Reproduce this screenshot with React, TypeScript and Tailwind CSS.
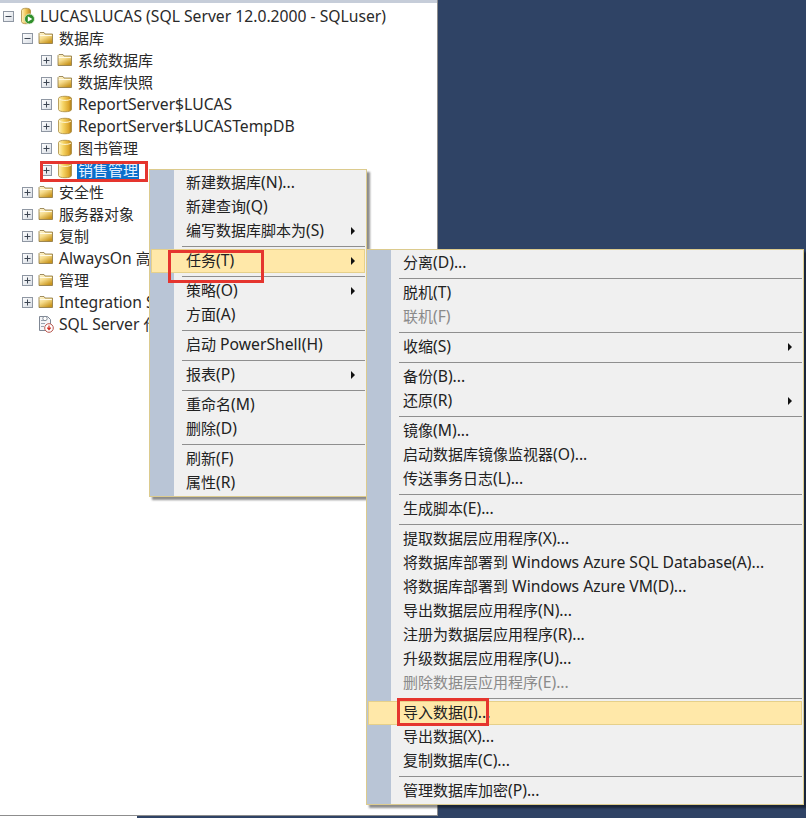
type IconKind = 'server' | 'folder' | 'db' | 'agent';

interface TreeNode {
  label: string;
  level: number;
  icon: IconKind;
  expander?: 'plus' | 'minus';
  selected?: boolean;
  clipped?: boolean;
}

const treeNodes: TreeNode[] = [
  { label: 'LUCAS\\LUCAS (SQL Server 12.0.2000 - SQLuser)', level: 0, icon: 'server', expander: 'minus' },
  { label: '数据库', level: 1, icon: 'folder', expander: 'minus' },
  { label: '系统数据库', level: 2, icon: 'folder', expander: 'plus' },
  { label: '数据库快照', level: 2, icon: 'folder', expander: 'plus' },
  { label: 'ReportServer$LUCAS', level: 2, icon: 'db', expander: 'plus' },
  { label: 'ReportServer$LUCASTempDB', level: 2, icon: 'db', expander: 'plus' },
  { label: '图书管理', level: 2, icon: 'db', expander: 'plus' },
  { label: '销售管理', level: 2, icon: 'db', expander: 'plus', selected: true },
  { label: '安全性', level: 1, icon: 'folder', expander: 'plus' },
  { label: '服务器对象', level: 1, icon: 'folder', expander: 'plus' },
  { label: '复制', level: 1, icon: 'folder', expander: 'plus' },
  { label: 'AlwaysOn 高', level: 1, icon: 'folder', expander: 'plus', clipped: true },
  { label: '管理', level: 1, icon: 'folder', expander: 'plus' },
  { label: 'Integration Services', level: 1, icon: 'folder', expander: 'plus', clipped: true },
  { label: 'SQL Server 代理', level: 1, icon: 'agent', clipped: true },
];

type MenuEntry =
  | 'sep'
  | { label: string; arrow?: boolean; disabled?: boolean; active?: boolean };

const contextMenu: MenuEntry[] = [
  { label: '新建数据库(N)...' },
  { label: '新建查询(Q)' },
  { label: '编写数据库脚本为(S)', arrow: true },
  'sep',
  { label: '任务(T)', arrow: true, active: true },
  'sep',
  { label: '策略(O)', arrow: true },
  { label: '方面(A)' },
  'sep',
  { label: '启动 PowerShell(H)' },
  'sep',
  { label: '报表(P)', arrow: true },
  'sep',
  { label: '重命名(M)' },
  { label: '删除(D)' },
  'sep',
  { label: '刷新(F)' },
  { label: '属性(R)' },
];

const taskMenu: MenuEntry[] = [
  { label: '分离(D)...' },
  'sep',
  { label: '脱机(T)' },
  { label: '联机(F)', disabled: true },
  'sep',
  { label: '收缩(S)', arrow: true },
  'sep',
  { label: '备份(B)...' },
  { label: '还原(R)', arrow: true },
  'sep',
  { label: '镜像(M)...' },
  { label: '启动数据库镜像监视器(O)...' },
  { label: '传送事务日志(L)...' },
  'sep',
  { label: '生成脚本(E)...' },
  'sep',
  { label: '提取数据层应用程序(X)...' },
  { label: '将数据库部署到 Windows Azure SQL Database(A)...' },
  { label: '将数据库部署到 Windows Azure VM(D)...' },
  { label: '导出数据层应用程序(N)...' },
  { label: '注册为数据层应用程序(R)...' },
  { label: '升级数据层应用程序(U)...' },
  { label: '删除数据层应用程序(E)...', disabled: true },
  'sep',
  { label: '导入数据(I)...', active: true },
  { label: '导出数据(X)...' },
  { label: '复制数据库(C)...' },
  'sep',
  { label: '管理数据库加密(P)...' },
];

// 라틴 글자만 살짝 크게 (원본은 Segoe UI + YaHei 조합)
function MixedText({ text }: { text: string }) {
  return (
    <>
      {text.split(/([\x20-\x7e]+)/).map((part, i) =>
        /[\x20-\x7e]/.test(part) ? (
          <span key={i} className="text-[15.7px] leading-[15px]">
            {part}
          </span>
        ) : (
          part
        ),
      )}
    </>
  );
}

function Expander({ kind }: { kind: 'plus' | 'minus' }) {
  return (
    <svg width="11" height="11" viewBox="0 0 11 11" className="shrink-0">
      <defs>
        <linearGradient id="expander-fill" x1="0" y1="0" x2="1" y2="1">
          <stop offset="0" stopColor="#ffffff" />
          <stop offset="1" stopColor="#d8dde4" />
        </linearGradient>
      </defs>
      <rect x="0.5" y="0.5" width="10" height="10" fill="url(#expander-fill)" stroke="#8f97a3" />
      <path d="M2.5 5.5h6" stroke="#3d4653" />
      {kind === 'plus' && <path d="M5.5 2.5v6" stroke="#3d4653" />}
    </svg>
  );
}

function FolderIcon() {
  return (
    <svg width="16" height="14" viewBox="0 0 16 14">
      <defs>
        <linearGradient id="folder-fill" x1="0" y1="0" x2="0.6" y2="1">
          <stop offset="0" stopColor="#fff8dc" />
          <stop offset="0.5" stopColor="#f6dc8c" />
          <stop offset="1" stopColor="#c9961f" />
        </linearGradient>
      </defs>
      <path d="M1 2.5 2 1.5h4l1 1.500h7.500v9.500H1z" fill="url(#folder-fill)" stroke="#8a7440" strokeWidth="0.8" />
      <path d="M1.800 4.500h12" stroke="#fffbe8" />
    </svg>
  );
}

function DbIcon() {
  return (
    <svg width="16" height="18" viewBox="0 0 16 18">
      <defs>
        <linearGradient id="db-fill" x1="0" y1="0" x2="1" y2="0">
          <stop offset="0" stopColor="#fff3bf" />
          <stop offset="0.35" stopColor="#f6d566" />
          <stop offset="0.8" stopColor="#dca52a" />
          <stop offset="1" stopColor="#a87a1c" />
        </linearGradient>
      </defs>
      <path
        d="M1.500 3.500c0-3 13-3 13 0v11c0 3-13 3-13 0z"
        fill="url(#db-fill)"
        stroke="#a98a3e"
        strokeWidth="0.8"
      />
      <path d="M2 4c2 1.800 10 1.800 12 0" fill="none" stroke="#fff8d8" />
    </svg>
  );
}

function ServerIcon() {
  return (
    <svg width="16" height="18" viewBox="0 0 16 18">
      <defs>
        <linearGradient id="server-fill" x1="0" y1="0" x2="1" y2="0">
          <stop offset="0" stopColor="#fff3bf" />
          <stop offset="0.5" stopColor="#f0c452" />
          <stop offset="1" stopColor="#b98524" />
        </linearGradient>
      </defs>
      <path
        d="M2.500 3.500c0-3 9-3 9 0v11c0 3-9 3-9 0z"
        fill="url(#server-fill)"
        stroke="#a98a3e"
        strokeWidth="0.8"
      />
      <circle cx="10.500" cy="12" r="5" fill="#2f8f2c" stroke="#e8f3dc" strokeWidth="0.8" />
      <path d="M8.800 9.300 13.300 12l-4.500 2.700z" fill="#ffffff" />
    </svg>
  );
}

function AgentIcon() {
  return (
    <svg width="16" height="18" viewBox="0 0 16 18">
      <path d="M1.500 1.500h8l3 3v11h-11z" fill="#f4f5f8" stroke="#7f8794" />
      <path d="M3 5.500h5M3 8.500h4M3 11.500h3" stroke="#9aa3b0" />
      <circle cx="7" cy="3.500" r="2.200" fill="#ffffff" stroke="#6f7885" strokeWidth="0.8" />
      <circle cx="11" cy="13" r="4.300" fill="#ffffff" stroke="#b9564e" />
      <path d="M11 10.500v3.500M9.300 12.600 11 14.600l1.700-2" fill="none" stroke="#cf2a1f" strokeWidth="1.200" />
    </svg>
  );
}

function NodeIcon({ kind }: { kind: IconKind }) {
  if (kind === 'server') return <ServerIcon />;
  if (kind === 'folder') return <FolderIcon />;
  if (kind === 'db') return <DbIcon />;
  return <AgentIcon />;
}

function TreeRow({ node }: { node: TreeNode }) {
  const indent = ['pl-[3px]', 'pl-[22px]', 'pl-[41px]'][node.level];
  return (
    <div
      className={`flex h-[22px] items-center whitespace-nowrap ${indent} ${
        node.clipped ? 'w-[149px] overflow-hidden' : ''
      }`}
    >
      <div className="w-[11px] shrink-0">{node.expander && <Expander kind={node.expander} />}</div>
      <div className="ml-[5px] flex w-[16px] shrink-0 items-center justify-center">
        <NodeIcon kind={node.icon} />
      </div>
      <span
        className={
          node.selected
            ? 'ml-[4px] border-t border-dotted border-[#333] bg-[#0a6fcb] px-px py-px text-[#e8f2ff]'
            : 'ml-[5px] text-[#2a2a2a]'
        }
      >
        <MixedText text={node.label} />
      </span>
    </div>
  );
}

function ContextMenu({ items, className }: { items: MenuEntry[]; className: string }) {
  return (
    <div
      className={`absolute border border-[#dccb8e] bg-[linear-gradient(to_right,#b9c5d6_24px,#f0f0f0_24px)] py-px shadow-[3px_3px_2px_rgba(0,0,0,0.45)] ${className}`}
    >
      {items.map((item, i) =>
        item === 'sep' ? (
          <div key={i} className="flex h-[6px] items-center pl-[32px] pr-px">
            <div className="h-px w-full bg-[#8f8f8f]" />
          </div>
        ) : (
          <div
            key={i}
            className={`flex h-[24px] items-center justify-between pb-px ${
              item.active
                ? 'mx-px border border-[#e6d08a] bg-[#ffe8a9] pl-[34px] pr-[9px] text-[#222]'
                : item.disabled
                  ? 'pl-[36px] pr-[11px] text-[#8a8a8a]'
                  : 'pl-[36px] pr-[11px] text-[#222]'
            }`}
          >
            <span className="whitespace-nowrap">
              <MixedText text={item.label} />
            </span>
            {item.arrow && (
              <svg width="4" height="8" viewBox="0 0 4 8">
                <path d="M0 0l4 4-4 4z" fill="#111" />
              </svg>
            )}
          </div>
        ),
      )}
    </div>
  );
}

export default function App() {
  return (
    <div className="relative flex h-[818px] w-[806px] flex-col overflow-hidden bg-[#2f4365] font-['Noto_Sans','Noto_Sans_CJK_SC',sans-serif] text-[15px] leading-none">
      <div className="h-[816px] w-[438px] shrink-0 border-r border-b border-[#8d8d8d] bg-white">
        <div className="h-[3px] bg-[#c6cdd9]" />
        <div className="pt-[2px]">
          {treeNodes.map((node) => (
            <TreeRow key={node.label} node={node} />
          ))}
        </div>
      </div>
      <div className="h-[2px] w-[137px] bg-white" />

      <ContextMenu items={contextMenu} className="top-[169px] left-[149px] w-[218px]" />
      <ContextMenu items={taskMenu} className="top-[249px] left-[366px] w-[438px]" />

      {/* 빨간 표시 박스 */}
      <div className="absolute top-[161px] left-[40px] h-[21px] w-[108px] border-[3px] border-[#e5352e]" />
      <div className="absolute top-[250px] left-[168px] h-[33px] w-[96px] border-[3px] border-[#e5352e]" />
      <div className="absolute top-[698px] left-[397px] h-[28px] w-[92px] border-[3px] border-[#e5352e]" />
    </div>
  );
}
